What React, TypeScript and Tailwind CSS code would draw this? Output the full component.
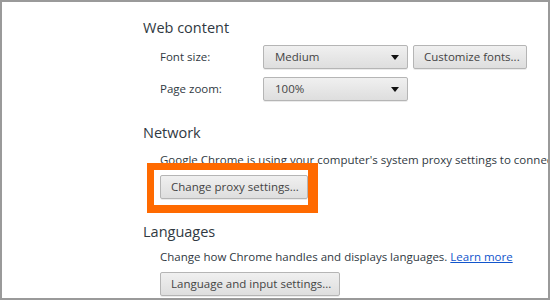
import React from "react";

const font = { fontFamily: '"Open Sans", "Noto Sans", sans-serif' };

function Btn({ children, className = "" }: { children: React.ReactNode; className?: string }) {
  return (
    <div
      className={`h-[24px] flex items-center rounded-[2px] border border-[#b5b5b5] bg-gradient-to-b from-[#f0f0f0] to-[#dedede] text-[11.5px] text-[#444] px-[10px] shadow-[0_1px_0_rgba(0,0,0,0.08)] whitespace-nowrap ${className}`}
    >
      {children}
    </div>
  );
}

function Select({ value }: { value: string }) {
  return (
    <div className="h-[24px] w-[145px] flex items-center justify-between rounded-[2px] border border-[#b5b5b5] bg-gradient-to-b from-[#f0f0f0] to-[#dedede] text-[11.5px] text-[#444] pl-[11px] pr-[8px] shadow-[0_1px_0_rgba(0,0,0,0.08)]">
      <span>{value}</span>
      <svg width="8" height="5" viewBox="0 0 8 5">
        <path d="M0 0 H8 L4 5 Z" fill="#111" />
      </svg>
    </div>
  );
}

export default function App() {
  return (
    <div
      style={font}
      className="w-[550px] h-[300px] border-2 border-[#9a9a9a] bg-white overflow-hidden text-[#303942]"
    >
      <div className="pl-[141px] pt-[16px] flex flex-col">
        <div className="text-[14.5px] leading-[20px] text-[#303942]">Web content</div>
        <div className="pl-[17px] mt-[7px] flex flex-col gap-[8px]">
          <div className="flex items-center">
            <div className="w-[103px] text-[11.5px]">Font size:</div>
            <Select value="Medium" />
            <Btn className="ml-[5px] w-[114px]">Customize fonts...</Btn>
          </div>
          <div className="flex items-center">
            <div className="w-[103px] text-[11.5px]">Page zoom:</div>
            <Select value="100%" />
          </div>
        </div>

        <div className="mt-[22px] text-[14.5px] leading-[20px]">Network</div>
        <div className="pl-[17px] mt-[9px] flex flex-col">
          <div className="text-[11.5px] leading-[16px] whitespace-nowrap">
            Google Chrome is using your computer's system proxy settings to connect to the network.
          </div>
          <div className="mt-[7px] relative self-start">
            <Btn className="w-[148px]">Change proxy settings...</Btn>
            <div className="absolute left-[-13px] top-[-12px] w-[171px] h-[50px] border-[#ff6a00] border-l-[7px] border-t-[7px] border-r-[10px] border-b-[8px]" />
          </div>
        </div>

        <div className="mt-[23px] text-[14.5px] leading-[20px]">Languages</div>
        <div className="pl-[17px] mt-[7px] flex flex-col">
          <div className="text-[11.5px] leading-[16px] whitespace-nowrap">
            Change how Chrome handles and displays languages.{" "}
            <span className="text-[#15c] underline">Learn more</span>
          </div>
          <div className="mt-[7px] self-start">
            <Btn className="w-[180px]">Language and input settings...</Btn>
          </div>
        </div>
      </div>
    </div>
  );
}
